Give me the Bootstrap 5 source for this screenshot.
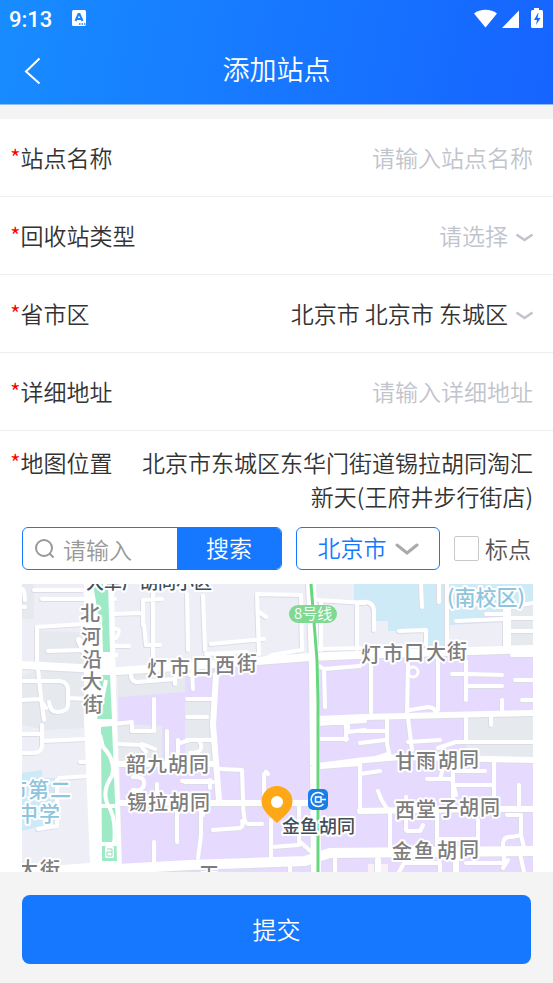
<!DOCTYPE html>
<html lang="zh-CN">
<head>
<meta charset="utf-8">
<meta name="viewport" content="width=device-width, initial-scale=1">
<title>添加站点</title>
<link href="https://cdn.jsdelivr.net/npm/bootstrap@5.3.0/dist/css/bootstrap.min.css" rel="stylesheet">
<style>
  body { font-family: "Noto Sans CJK SC", sans-serif; font-size: 23px; font-weight: 350; line-height: 34px; color: #333; background: #f4f4f4; }
  .top-area { background: linear-gradient(100deg, #188cff, #1664ff); color: #fff; border-bottom: 1px solid #8dbcff; }
  .status-bar { height: 37px; padding: 0 8px 0 9px; }
  .clock { font: 500 22px/37px Roboto, sans-serif; padding-top: 2px; }
  .title-bar { height: 67px; padding-bottom: 3px; display: grid; grid-template-columns: 64px 1fr 64px; align-items: center; }
  .page-title { font-size: 27px; line-height: 40px; font-weight: 350; }
  .form-area { margin-top: 14px; }
  .form-line { min-height: 78px; padding: 0 20px 2px 10px; border-bottom: 1px solid #eee; }
  .required::before { content: "*"; color: #f00; }
  .plain { border: 0; outline: 0; background: transparent; color: #333; appearance: none; padding: 0; min-width: 0; font-weight: 350; }
  .plain.back-btn { height: 48px; padding: 4px 0 0 24px; color: #fff; }
  .plain::placeholder { color: #c0c4cc; opacity: 1; }
  select.plain { text-align-last: right; }
  select.unset { color: #c0c4cc; }
  .place-line { padding: 14px 20px 0 10px; gap: 24px; }
  .tools { padding: 14px 22px 0; gap: 14px; }
  .search-box { height: 43px; border: 1px solid #1678ff; border-radius: 6px; overflow: hidden; }
  .search-box .plain::placeholder { color: #999; }
  .search-btn { width: 104px; padding: 0 0 4px; background: #1678ff; color: #fff; border: 0; font-weight: 350; }
  .city-box { width: 144px; height: 43px; border: 1px solid #1678ff; border-radius: 6px; }
  .city-box select { color: #1678ff; padding-bottom: 3px; }
  .mark-check { gap: 6px; color: #555; white-space: nowrap; }
  .mark-check label { padding-bottom: 2px; }
  .mark-check input { width: 25px; height: 25px; margin: 0; appearance: none; border: 1px solid #c8c9cc; border-radius: 2px; background: #fff; }
  .mark-check input:checked { background: #1678ff; }
  .map-area { padding: 14px 20px 0 22px; }
  .submit-area { padding: 23px 22px 19px; }
  .submit-btn { height: 69px; padding: 0 0 2px; font-size: 24px; font-weight: 350; border: 0; border-radius: 8px; background: #1678ff; color: #fff; }
  .roads { fill: none; stroke-linejoin: round; stroke-linecap: round; }
  .map-label { font-size: 20px; font-weight: 500; fill: #7d7d7d; stroke: #fff; stroke-width: 4px; stroke-linejoin: round; paint-order: stroke; }
  .map-label .poi { fill: #434e59; font-size: 18px; }
  .map-label .school { fill: #8fc4dc; font-size: 21px; }
</style>
</head>
<body>
<header class="top-area">
  <div class="status-bar d-flex align-items-center">
    <span class="clock">9:13</span>
    <svg class="ms-3" width="20" height="20" viewBox="0 0 20 20" aria-hidden="true">
      <rect x="4" y="1" width="14" height="16" rx="1.5" fill="#fff"/>
      <path d="M7.500 12l3-7h1l3 7M8.500 10h5" fill="none" stroke="#1884ff" stroke-width="2"/>
      <path d="M11 15h1.500m1 0h1.500m1 0h1.500" stroke="#1884ff" stroke-width="1.500"/>
    </svg>
    <svg class="ms-auto" width="71" height="22" viewBox="0 0 71 22" fill="#fff" aria-hidden="true">
      <path d="M0 5.500C6 .500 17 .500 23 5.500L11.500 19.500z"/>
      <path d="M45 2.500V20H28z"/>
      <path d="M57 3.500q0-1.500 1.500-1.500H60V0h5v2h2.500q1.500 0 1.500 1.500v15q0 1.500-1.500 1.500h-9q-1.500 0-1.500-1.500z"/>
      <path d="M64 5l-4 7h3l-1 5 4.500-7h-3l1-5z" fill="#1668ff"/>
    </svg>
  </div>
  <div class="title-bar">
    <button type="button" class="plain back-btn text-start d-flex align-items-center" aria-label="返回">
      <svg width="18" height="28" viewBox="0 0 18 28" fill="none" stroke="currentColor" stroke-width="2"><path d="M15.500 1.500L2 14.500l13.500 12"/></svg>
    </button>
    <h1 class="page-title text-center mb-0">添加站点</h1>
  </div>
</header>

<main>
  <form>
    <div class="form-area bg-white">
      <div class="form-line d-flex align-items-center">
        <label class="required flex-shrink-0" for="site-name">站点名称</label>
        <input id="site-name" class="plain flex-grow-1 text-end" type="text" placeholder="请输入站点名称">
      </div>
      <div class="form-line d-flex align-items-center">
        <label class="required flex-shrink-0" for="site-type">回收站类型</label>
        <select id="site-type" class="plain unset flex-grow-1"><option>请选择</option></select>
        <svg class="ms-2" width="17" height="16" viewBox="0 0 17 16" fill="none" stroke="#c0c4cc" stroke-width="2.500" aria-hidden="true"><path d="M.500 7.500l8 5.500 8-5.500"/></svg>
      </div>
      <div class="form-line d-flex align-items-center">
        <label class="required flex-shrink-0" for="region">省市区</label>
        <select id="region" class="plain flex-grow-1"><option>北京市 北京市 东城区</option></select>
        <svg class="ms-2" width="17" height="16" viewBox="0 0 17 16" fill="none" stroke="#c0c4cc" stroke-width="2.500" aria-hidden="true"><path d="M.500 7.500l8 5.500 8-5.500"/></svg>
      </div>
      <div class="form-line d-flex align-items-center">
        <label class="required flex-shrink-0" for="address">详细地址</label>
        <input id="address" class="plain flex-grow-1 text-end" type="text" placeholder="请输入详细地址">
      </div>
      <div class="place-line d-flex">
        <span class="required flex-shrink-0">地图位置</span>
        <output class="flex-grow-1 text-end p-0">北京市东城区东华门街道锡拉胡同淘汇新天(王府井步行街店)</output>
      </div>
      <div class="tools d-flex align-items-center">
        <div class="search-box d-flex flex-grow-1">
          <label class="d-flex align-items-center ps-2 ms-1 me-2" for="keyword" aria-label="搜索">
            <svg width="20" height="20" viewBox="0 0 20 20" fill="none" stroke="#999" stroke-width="2"><circle cx="9" cy="9" r="8"/><path d="M14.500 14.500l4 4"/></svg>
          </label>
          <input id="keyword" class="plain flex-fill w-25" type="search" placeholder="请输入">
          <button type="button" class="search-btn flex-shrink-0">搜索</button>
        </div>
        <div class="city-box d-flex flex-shrink-0 align-items-center justify-content-center">
          <select class="plain" aria-label="城市"><option>北京市</option></select>
          <svg class="ms-2" width="24" height="14" viewBox="0 0 24 14" fill="none" stroke="#aaa" stroke-width="3" stroke-linecap="round" aria-hidden="true"><path d="M2 3l10 8 10-8"/></svg>
        </div>
        <div class="mark-check d-flex flex-shrink-0 align-items-center">
          <input id="mark-point" type="checkbox"><label for="mark-point">标点</label>
        </div>
      </div>
      <div class="map-area">
        <svg class="d-block w-100" viewBox="22 584 511 288" role="img" aria-label="地图">
          <defs>
            <g id="road-lines">
              <path stroke-width="4" d="M34 590H82M42 599H84M115 599H84M22 607H25M22 590Q24 586 25 600M37 627L85 624M37 627V660L41 697L44 720M48 651L84 650M113 614L142 613M115 629Q122 628 116 638M144 625L146 645H160M153 584V665M162 599L143 600V625M115 646H129M131 672Q130 682 138 682L175 679M175 672V684M22 681H60Q68 682 68 690V704Q68 712 57 712Q50 712 49 702M68 698L86 699M22 700L40 699L46 708M115 724L132 722M154 699V725M22 734H42V725M42 741L87 739M22 753H35Q42 752 42 745V725M80 762H87M59 778L89 776M57 780V826L38 829M132 725V731H154V725M118 744L140 745L146 752M142 744L155 749M167 731V765M178 740V762M180 743L190 740M133 777Q145 776 144 784T133 790M157 784V797M177 805V842M154 842V866M182 781H210"/>
              <path stroke-width="4" d="M187 594L188 650M203 596L205 650M259 654L257 596M257 594L301 595L302 650L272 655L260 662M259 612L266 617M211 644L264 639M206 654L247 652M317 600L365 603M321 603V650M318 649L360 648M357 603V650M317 665L324 669L325 707M324 669L360 666M317 724L365 721M346 720V740M320 739L347 739M348 725V732L365 730M320 767L360 764M360 764V812M360 774L380 771M192 672L193 689M190 675L210 674M187 699H213M187 717H207M187 740H213M200 742Q205 753 190 753M185 782H213M210 780V788M220 769L242 770L243 800Q243 824 248 824H262M264 774V800M266 773Q265 770 268 774M213 830L240 828Q244 826 242 821M201 805V835L198 858M203 810V815M271 820V860M272 847L299 845L299 803M299 841L315 855M290 802H318M290 865V872"/>
              <path stroke-width="4" d="M360 602Q374 600 374 612V630M421 584L422 607M439 584V602M399 631L426 630V645M447 584V650M456 621L504 619M486 614H504M506 608L533 603M506 631H533M507 618H533M371 660V713M408 664L407 715M410 710L428 707Q436 707 436 715M438 658V710M452 674L468 674L502 675M466 661V700M466 686H502M515 680H533M522 700H533M502 700V713M387 718V744L390 758M408 718L412 750M360 731H385M360 743L385 740M408 742L440 740M438 748L456 742L466 742V718M491 718V725M466 742H533M512 655H533M376 758L388 754M453 758V810M494 762V810M427 779H452L456 795M440 779L443 768M456 771H485M455 785H492M519 785V810M378 791Q382 804 390 811M390 812V852M406 797V830M407 831H420L423 825M437 812V848M478 820V848M437 839H478M507 815H521V835L525 852M503 850V843Q504 836 512 837L521 835M466 863H504V856M503 868L508 860M520 854L524 872M399 872L404 863H440V872M456 868V855M335 858V872"/>
              <path stroke-width="6" d="M216 675L213 725L219 800M118 803H310M118 764H215M84 651L79 640M318 719L365 717L533 713M318 766L365 760L400 757L533 760M360 811L480 809L533 809M378 860V872M456 856V872"/>
              <circle cx="413" cy="672" r="5" stroke-width="3"/>
              <path stroke-width="8" d="M22 665L80 668L118 671L190 666L310 657L380 654L533 649M507 608V649"/>
              <path stroke-width="10" d="M311 584L314 660L316 872M118 869L190 865L305 861L330 853L533 851"/>
            </g>
          </defs>
          <rect x="22" y="584" width="511" height="288" fill="#eeeef7"/>
          <path fill="#e6e9ee" d="M22 584H34V619H22zM37 631L82 632L87 728L45 730L22 725V676L37 670zM118 674L190 672V692L118 697z"/>
          <path fill="#e6dbff" d="M118 697L185 692V671L310 661L533 653V872H122z"/>
          <path fill="#e6e9ee" d="M185 699H213V762H185zM118 724L162 726V762H119zM464 716H533V758L467 757zM508 606H533V645H508z"/>
          <path fill="#cdeaf6" d="M354 584H533V604L507 608L502 622L450 625L448 646H427L425 631H388V621H375V605L354 600zM22 773L42 770V778H57V822L22 831z"/>
          <path fill="#fcf0f8" d="M368 864H388V872H368z"/>
          <g class="roads">
            <use href="#road-lines" stroke="#dcdce8" transform="translate(-1 1)"/>
            <use href="#road-lines" stroke="#fff"/>
          </g>
          <path fill="#fff" d="M84 584H114L116 690L122 872H22V868L90 863L84 720z"/>
          <path fill="#9eeac6" d="M93 584H103L106 605L100 625L98 614zM105 584H108L110 652H103L102 624zM96 675H110L112 719H97L103 690zM101 727L112 726L115 800L117 861H102z"/>
          <path fill="none" stroke="#fff" stroke-width="4" d="M100 735L103 747Q116 760 112 776Q102 790 107 803Q117 818 114 844M101 806H118M101 844H118M97 655H118M106 680L101 705"/>
          <rect x="105" y="846" width="9" height="12" rx="2" fill="#fff"/>
          <path d="M107 849H112V856H107V852H112" fill="none" stroke="#8fdfb9"/>
          <path d="M221 764L312 766" fill="none" stroke="#e5dfdf" stroke-dasharray="6 4"/>
          <path d="M311 584L317 660L318 700V872" fill="none" stroke="#66d77d" stroke-width="3"/>
          <rect x="289" y="605" width="48" height="18" rx="9" fill="#80d990"/>
          <text x="294" y="619" font-size="15" fill="#fff">8号线</text>
          <g class="map-label">
            <text class="poi" x="86" y="589">大草厂胡同小区</text>
            <text x="80 81 82 82 83" y="621 644 667 689 712">北河沿大街</text>
            <text x="147 170 192 215 237" y="676 675 674 673 671">灯市口西街</text>
            <text x="361 383 404 426 447" y="662 661 660 660 659">灯市口大街</text>
            <text x="126 147 168 189" y="772">韶九胡同</text>
            <text x="127 148 169 190" y="810">锡拉胡同</text>
            <text x="395 416 438 459" y="769 768 768 767">甘雨胡同</text>
            <text x="395 416 438 459 480" y="818 817 816 815 815">西堂子胡同</text>
            <text x="392 414 437 459" y="859 858 858 857">金鱼胡同</text>
            <text x="18 40" y="877">大街</text>
            <text x="199" y="882">王</text>
            <text class="school" x="447" y="605">(南校区)</text>
            <text class="school" x="6 28 50" y="797">市第二</text>
            <text class="school" x="17 39" y="821">中学</text>
            <text class="poi" x="282 300 319 337" y="833">金鱼胡同</text>
          </g>
          <rect x="308" y="789" width="20" height="21" rx="5" fill="#1a7ee8"/>
          <g fill="none" stroke="#fff" stroke-width="1.500">
            <path d="M323.500 795A7 7 0 1 0 323.500 804"/>
            <path d="M326 799.500H321M321 797H315.500V802H321z"/>
          </g>
          <path d="M277 823C272 818 261.500 811 261.500 801.500A15.500 15.500 0 0 1 292.500 801.500C292.500 811 282 818 277 823z" fill="#ffa817"/>
          <circle cx="277" cy="802" r="6" fill="#fff"/>
        </svg>
      </div>
    </div>
    <div class="submit-area">
      <button type="submit" class="submit-btn w-100">提交</button>
    </div>
  </form>
</main>
<script src="https://cdn.jsdelivr.net/npm/bootstrap@5.3.0/dist/js/bootstrap.bundle.min.js"></script>
</body>
</html>
